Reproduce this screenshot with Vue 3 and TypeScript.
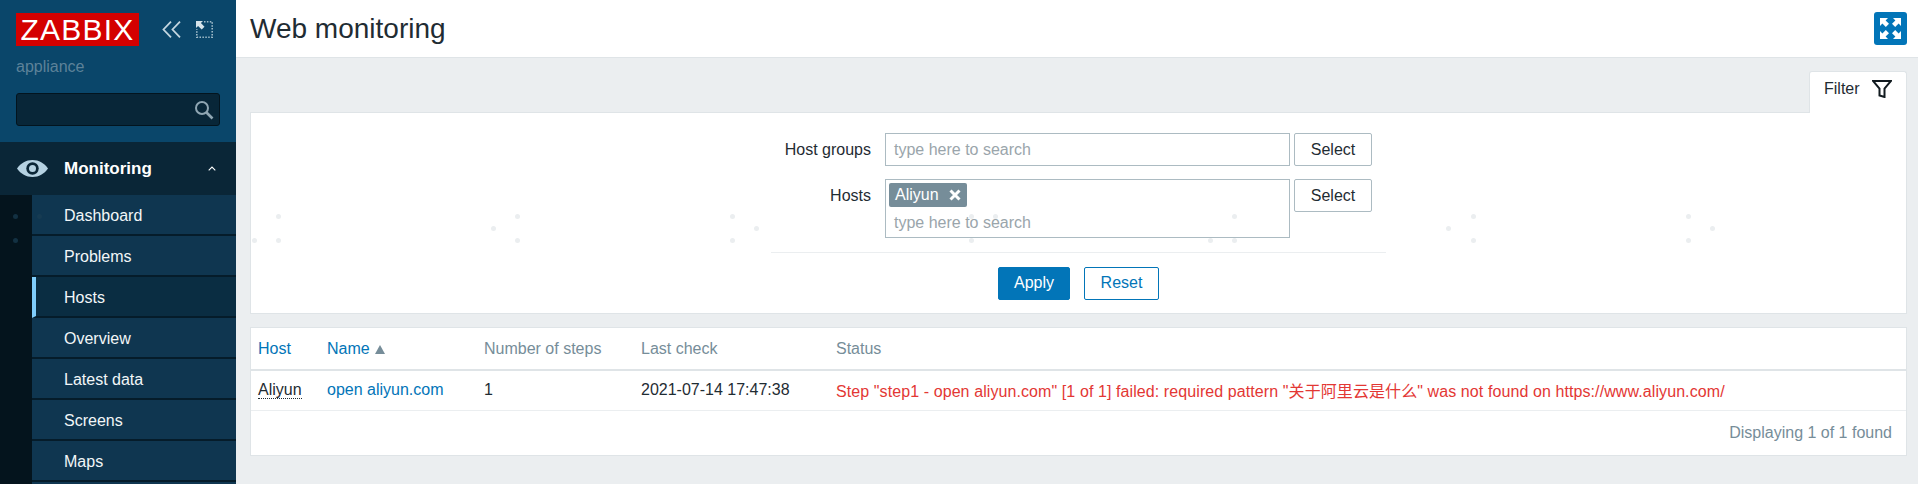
<template>
  <div class="page">
    <aside class="sidebar">
      <div class="brand">
        <div class="brand-top">
          <div class="logo">ZABBIX</div>
          <svg class="side-icon collapse" viewBox="0 0 19 17" width="19" height="17">
            <path d="M9 .7 1.500 8.500 9 16.300M18 .7l-7.500 7.800 7.500 7.800" fill="none" stroke="#c3d6e0" stroke-width="1.800" />
          </svg>
          <svg class="side-icon expand" viewBox="0 0 17 17" width="17" height="17">
            <path d="M8 .8h8.200v15.400H.8V8" fill="none" stroke="#9fbbc9" stroke-width="1.600" stroke-dasharray="1.500 1.400" />
            <path d="M0 0h7L4.900 2.100 8.500 5.700 5.700 8.500 2.100 4.900 0 7z" fill="#d5e3ea" />
          </svg>
        </div>
        <div class="server">appliance</div>
        <div class="search">
          <svg viewBox="0 0 20 20" width="20" height="20">
            <circle cx="8" cy="8" r="6" fill="none" stroke="#8fa6b3" stroke-width="2" />
            <path d="m12.500 12.500 6 6" stroke="#8fa6b3" stroke-width="2.600" />
          </svg>
        </div>
      </div>
      <div class="menu-head">
        <svg viewBox="0 0 31 17" width="31" height="17">
          <path d="M0 8.500C4 3 9 0 15.500 0S27 3 31 8.500C27 14 22 17 15.500 17S4 14 0 8.500z" fill="#b5d2e2" />
          <circle cx="15.500" cy="8.500" r="6.200" fill="#0a2637" />
          <circle cx="15.500" cy="8.500" r="3.500" fill="#b5d2e2" />
        </svg>
        <span class="menu-title">Monitoring</span>
        <svg class="chevron" viewBox="0 0 8 5" width="8" height="5">
          <path d="M.7 4.300 4 1l3.300 3.300" fill="none" stroke="#fff" stroke-width="1.100" />
        </svg>
      </div>
      <div class="submenu">
        <div class="strip"></div>
        <ul class="items">
          <li v-for="item in menuItems" :key="item" :class="{ active: item === 'Hosts' }">{{ item }}</li>
        </ul>
      </div>
    </aside>

    <main class="main">
      <header class="topbar">
        <h1>Web monitoring</h1>
        <button class="fullscreen" type="button" aria-label="Fullscreen">
          <svg viewBox="0 0 21 21" width="21" height="21">
            <path d="M0 0h8L5.600 2.400 9 5.800 5.800 9 2.400 5.600 0 8zM21 0v8l-2.400-2.400L15.200 9 12 5.800l3.400-3.400L13 0zM0 21v-8l2.400 2.400L5.800 12 9 15.200l-3.400 3.400L8 21zM21 21h-8l2.400-2.400L12 15.200l3.200-3.200 3.400 3.400L21 13z" fill="#fff" />
          </svg>
        </button>
      </header>

      <div class="content">
        <div class="filter-tabs">
          <div class="filter-tab">
            <span>Filter</span>
            <svg viewBox="0 0 20 18" width="20" height="18">
              <path d="M1 1h18l-6.500 7.500V17L7.500 15.400V8.500z" fill="none" stroke="#111a1f" stroke-width="2" />
            </svg>
          </div>
        </div>

        <section class="filter">
          <div class="filter-form">
            <div class="form-row">
              <label>Host groups</label>
              <div class="multiselect">
                <span class="placeholder">type here to search</span>
              </div>
              <button class="btn-select" type="button">Select</button>
            </div>
            <div class="form-row">
              <label>Hosts</label>
              <div class="multiselect tall">
                <span class="tag">Aliyun
                  <svg viewBox="0 0 12 12" width="12" height="12">
                    <path d="m1.500 1.500 9 9m0-9-9 9" stroke="#fff" stroke-width="3" />
                  </svg>
                </span>
                <span class="placeholder">type here to search</span>
              </div>
              <button class="btn-select" type="button">Select</button>
            </div>
          </div>
          <div class="filter-actions">
            <button class="btn-apply" type="button">Apply</button>
            <button class="btn-reset" type="button">Reset</button>
          </div>
        </section>

        <section class="results">
          <table>
            <colgroup>
              <col style="width: 68px" />
              <col style="width: 157px" />
              <col style="width: 157px" />
              <col style="width: 195px" />
              <col />
            </colgroup>
            <thead>
              <tr>
                <th><a>Host</a></th>
                <th><a>Name</a><span class="sort"></span></th>
                <th>Number of steps</th>
                <th>Last check</th>
                <th>Status</th>
              </tr>
            </thead>
            <tbody>
              <tr>
                <td><span class="host-link">Aliyun</span></td>
                <td><a>open aliyun.com</a></td>
                <td>1</td>
                <td>2021-07-14 17:47:38</td>
                <td class="failed">Step "step1 - open aliyun.com" [1 of 1] failed: required pattern "关于阿里云是什么" was not found on https://www.aliyun.com/</td>
              </tr>
            </tbody>
          </table>
          <div class="table-footer">Displaying 1 of 1 found</div>
        </section>
      </div>
    </main>

    <div class="dots" aria-hidden="true">
      <i
        v-for="dot in dots"
        :key="dot.x + '-' + dot.y"
        :style="{ left: dot.x + 'px', top: dot.y + 'px' }"
        :class="{ dark: dot.x < 100 }"
      ></i>
    </div>
  </div>
</template>

<script setup lang="ts">
const menuItems = ['Dashboard', 'Problems', 'Hosts', 'Overview', 'Latest data', 'Screens', 'Maps']

// background watermark dots, repeated across the page
const dots = [
  [15, 216], [39, 216], [15, 240],
  [278, 216], [278, 240], [254, 240],
  [493, 228], [517, 216], [517, 240],
  [732, 216], [732, 240], [756, 228],
  [971, 216], [995, 216], [971, 240],
  [1210, 240], [1234, 216], [1234, 240],
  [1448, 228], [1473, 216], [1473, 240],
  [1688, 216], [1688, 240], [1712, 228]
].map(([x, y]) => ({ x, y }))
</script>

<style>
html,
body {
  margin: 0;
  height: 484px;
  overflow: hidden;
}
</style>

<style scoped>
.page {
  position: relative;
  display: flex;
  width: 1918px;
  height: 484px;
  overflow: hidden;
  background: #ebeef0;
  color: #1f2c33;
  font-family: "Liberation Sans", Arial, "Noto Sans CJK SC", sans-serif;
  font-size: 16px;
}

/* Sidebar */
.sidebar {
  flex: 0 0 236px;
  display: flex;
  flex-direction: column;
  overflow: hidden;
  background: #0a466a;
  color: #f2f6f8;
}

.brand {
  flex: none;
  height: 142px;
  padding: 13px 16px 0;
  box-sizing: border-box;
}

.brand-top {
  display: flex;
  align-items: center;
  height: 33px;
}

.logo {
  width: 123px;
  height: 33px;
  background: #d40000;
  color: #fff;
  font-size: 30px;
  line-height: 34px;
  text-align: center;
  letter-spacing: 1.200px;
}

.side-icon {
  flex: none;
}

.collapse {
  margin-left: 23px;
}

.expand {
  margin-left: 15px;
}

.server {
  margin-top: 11px;
  color: #5d8299;
  font-size: 16px;
  line-height: 20px;
}

.search {
  display: flex;
  align-items: center;
  justify-content: flex-end;
  width: 204px;
  height: 33px;
  margin-top: 16px;
  padding-right: 5px;
  box-sizing: border-box;
  background: #082638;
  border: 1px solid #03141e;
  border-radius: 3px;
}

.menu-head {
  flex: none;
  display: flex;
  align-items: center;
  height: 53px;
  padding-left: 17px;
  background: #0a2637;
}

.menu-title {
  margin: 1px 0 0 16px;
  color: #fff;
  font-size: 17px;
  font-weight: 700;
}

.chevron {
  margin-left: 56px;
}

.submenu {
  flex: 1;
  display: flex;
}

.strip {
  flex: 0 0 32px;
  background: #04141d;
}

.items {
  flex: 1;
  margin: 0;
  padding: 0;
  list-style: none;
  background: #0f3650;
}

.items li {
  height: 39px;
  padding-left: 32px;
  border-bottom: 2px solid #051c2a;
  line-height: 41px;
}

.items li.active {
  padding-left: 28px;
  background: #0a2d42;
  border-left: 4px solid #7fcdfb;
}

/* Main area */
.main {
  flex: 1;
  min-width: 0;
  display: flex;
  flex-direction: column;
}

.topbar {
  flex: none;
  display: flex;
  align-items: center;
  justify-content: space-between;
  height: 57px;
  padding: 0 11px 0 14px;
  background: #fff;
  border-bottom: 1px solid #dfe4e7;
}

h1 {
  margin: 0;
  font-size: 28px;
  font-weight: 400;
  line-height: 57px;
}

.fullscreen {
  display: flex;
  align-items: center;
  justify-content: center;
  width: 33px;
  height: 33px;
  padding: 0;
  background: #0275b8;
  border: none;
  border-radius: 3px;
}

.content {
  padding: 13px 11px 0 14px;
}

.filter-tabs {
  display: flex;
  justify-content: flex-end;
}

.filter-tab {
  position: relative;
  display: flex;
  align-items: center;
  justify-content: space-between;
  width: 98px;
  height: 42px;
  margin-bottom: -1px;
  padding: 0 14px 7px 14px;
  box-sizing: border-box;
  background: #fff;
  border: 1px solid #dfe4e7;
  border-bottom: none;
  border-radius: 3px 3px 0 0;
}

.filter {
  height: 202px;
  box-sizing: border-box;
  padding-top: 20px;
  background: #fff;
  border: 1px solid #dfe4e7;
}

.filter-form {
  width: 615px;
  height: 120px;
  margin: 0 auto;
  box-sizing: border-box;
  border-bottom: 1px solid #ebeef0;
}

.form-row {
  display: flex;
  align-items: flex-start;
  margin-bottom: 13px;
}

.form-row label {
  width: 100px;
  margin-right: 14px;
  text-align: right;
  line-height: 33px;
}

.multiselect {
  display: flex;
  flex-direction: column;
  align-items: flex-start;
  width: 405px;
  height: 33px;
  box-sizing: border-box;
  padding-left: 8px;
  border: 1px solid #acbbc2;
  line-height: 31px;
}

.multiselect.tall {
  height: 59px;
  padding-left: 3px;
}

.multiselect.tall .placeholder {
  padding-left: 5px;
}

.placeholder {
  color: #9aa5ab;
}

.tag {
  display: flex;
  align-items: center;
  gap: 10px;
  height: 24px;
  margin-top: 3px;
  padding: 0 6px;
  box-sizing: border-box;
  background: #768d99;
  border-radius: 2px;
  color: #fff;
  line-height: 24px;
}

button {
  font: inherit;
  cursor: pointer;
}

.btn-select {
  width: 78px;
  height: 33px;
  margin-left: 4px;
  padding: 0;
  background: #fff;
  border: 1px solid #acbbc2;
  border-radius: 2px;
  color: #1f2c33;
}

.filter-actions {
  display: flex;
  justify-content: center;
  gap: 14px;
  margin-top: 14px;
}

.btn-apply,
.btn-reset {
  height: 33px;
  padding: 0 0 2px;
  border: 1px solid #0275b8;
  border-radius: 2px;
}

.btn-apply {
  width: 72px;
  background: #0275b8;
  color: #fff;
}

.btn-reset {
  width: 75px;
  background: #fff;
  color: #0275b8;
}

.results {
  margin-top: 13px;
  background: #fff;
  border: 1px solid #dfe4e7;
}

table {
  width: 100%;
  border-collapse: collapse;
  table-layout: fixed;
}

th {
  height: 42px;
  padding: 0 8px;
  box-sizing: border-box;
  border-bottom: 2px solid #dfe4e7;
  color: #768d99;
  font-weight: 400;
  text-align: left;
}

td {
  height: 40px;
  padding: 0 8px;
  box-sizing: border-box;
  border-bottom: 1px solid #ebeef0;
}

th:first-child,
td:first-child {
  padding-left: 7px;
}

a {
  color: #0275b8;
}

.sort {
  display: inline-block;
  margin-left: 5px;
  border: 5px solid transparent;
  border-top: 0;
  border-bottom: 9px solid #768d99;
}

.host-link {
  border-bottom: 1px dotted #1f2c33;
}

.failed {
  color: #e33734;
  white-space: nowrap;
  letter-spacing: 0.090px;
}

.table-footer {
  height: 44px;
  padding-right: 14px;
  color: #768d99;
  line-height: 44px;
  text-align: right;
}

/* Watermark */
.dots i {
  position: absolute;
  width: 5px;
  height: 5px;
  margin: -2px 0 0 -2px;
  background: #ebeef0;
  border-radius: 50%;
  pointer-events: none;
}

.dots i.dark {
  background: #1a3d52;
  opacity: 0.7;
}
</style>
